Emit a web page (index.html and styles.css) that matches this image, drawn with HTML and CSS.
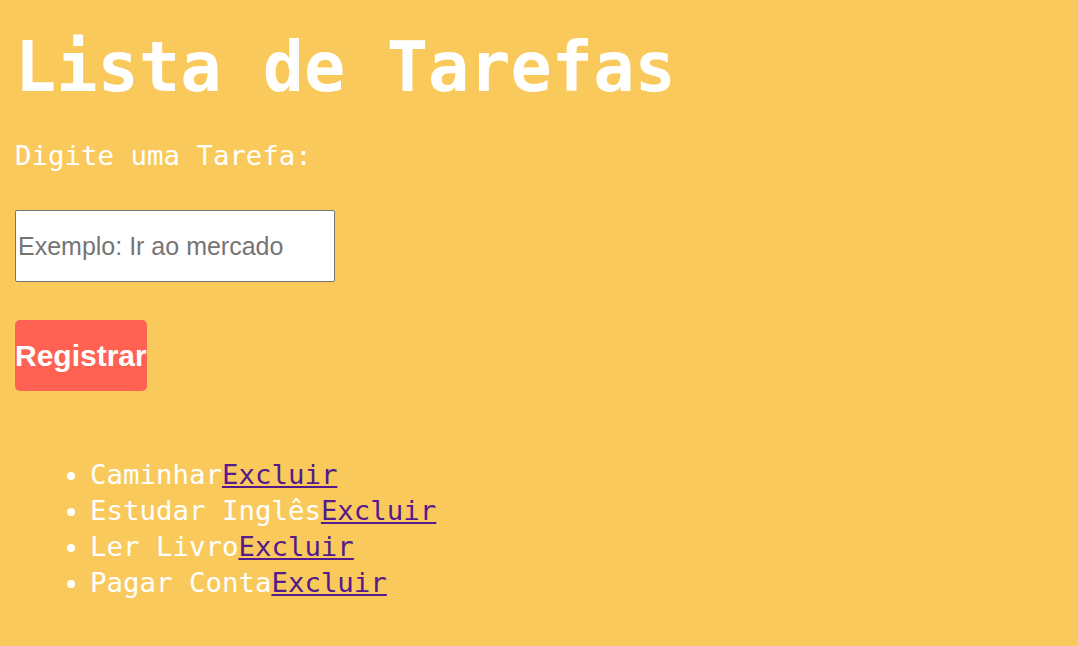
FILE: index.html
```html
<!DOCTYPE html>
<html lang="pt-BR">
<head>
<meta charset="utf-8">
<title>Lista de Tarefas</title>
<link rel="stylesheet" href="styles.css">
</head>
<body>
<main class="app">
  <h1 class="title">Lista de Tarefas</h1>
  <p class="label">Digite uma Tarefa:</p>
  <input class="task-input" type="text" placeholder="Exemplo: Ir ao mercado">
  <button class="btn">Registrar</button>
  <ul class="tasks">
    <li>Caminhar<a href="#">Excluir</a></li>
    <li>Estudar Inglês<a href="#">Excluir</a></li>
    <li>Ler Livro<a href="#">Excluir</a></li>
    <li>Pagar Conta<a href="#">Excluir</a></li>
  </ul>
</main>
</body>
</html>
```
FILE: styles.css
```css
html, body {
  margin: 0;
  padding: 0;
  background: #fac95c;
}
.app {
  display: flex;
  flex-direction: column;
  align-items: flex-start;
  padding: 27px 15px 0 15px;
  font-family: "DejaVu Sans Mono", monospace;
  color: #ffffff;
}
.title {
  margin: 0;
  font-size: 68.6px;
  line-height: 80px;
  font-weight: bold;
}
.label {
  margin: 33px 0 0 0;
  font-size: 27.4px;
  line-height: 32px;
}
.task-input {
  margin-top: 38px;
  box-sizing: border-box;
  width: 320px;
  height: 72px;
  border: 1px solid #767676;
  border-radius: 2px;
  padding: 0 2px;
  font-family: "Liberation Sans", Arial, sans-serif;
  font-size: 25px;
  background: #fff;
}
.task-input::placeholder {
  color: #757575;
}
.btn {
  margin-top: 38px;
  box-sizing: border-box;
  height: 71px;
  padding: 0;
  border: none;
  border-radius: 5px;
  background: #ff6152;
  color: #fff;
  font-family: "Liberation Sans", Arial, sans-serif;
  font-weight: bold;
  font-size: 30px;
}
.tasks {
  margin: 66px 0 0 0;
  padding-left: 75px;
  font-size: 27.4px;
  line-height: 36px;
}
.tasks a {
  color: #551a8b;
}
```
